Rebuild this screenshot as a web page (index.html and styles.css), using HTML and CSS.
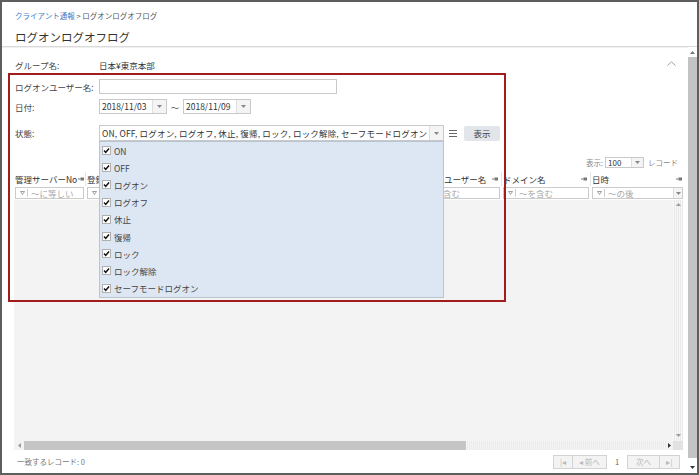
FILE: index.html
```html
<!DOCTYPE html>
<html lang="ja">
<head>
<meta charset="utf-8">
<title>ログオンログオフログ</title>
<link rel="stylesheet" href="styles.css">
</head>
<body>
<div class="frame">
  <header class="top">
    <div class="crumb"><span class="crumb-link">クライアント通報</span> &gt; ログオンログオフログ</div>
    <h1 class="title">ログオンログオフログ</h1>
  </header>
  <div class="main">
    <div class="content">
      <div class="row group-row">
        <span class="label">グループ名:</span>
        <span class="value">日本¥東京本部</span>
        <svg class="chevron" width="9" height="5" viewBox="0 0 9 5"><polyline points="0.5,4.5 4.5,0.8 8.5,4.5" fill="none" stroke="#a0a0a0" stroke-width="1"/></svg>
      </div>
      <div class="row user-row">
        <span class="label">ログオンユーザー名:</span>
        <div class="text-input"></div>
      </div>
      <div class="row date-row">
        <span class="label">日付:</span>
        <div class="date"><span class="date-text">2018/11/03</span><span class="dd-btn"><svg width="5" height="3" viewBox="0 0 5 3"><path d="M0 0h5L2.5 3z" fill="#888"/></svg></span></div>
        <span class="tilde">〜</span>
        <div class="date"><span class="date-text">2018/11/09</span><span class="dd-btn"><svg width="5" height="3" viewBox="0 0 5 3"><path d="M0 0h5L2.5 3z" fill="#888"/></svg></span></div>
      </div>
      <div class="row status-row">
        <span class="label">状態:</span>
        <div class="multi">
          <span class="multi-text">ON, OFF, ログオン, ログオフ, 休止, 復帰, ロック, ロック解除, セーフモードログオン</span>
          <span class="dd-btn"><svg width="5" height="3" viewBox="0 0 5 3"><path d="M0 0h5L2.5 3z" fill="#888"/></svg></span>
          <ul class="dropdown">
            <li class="opt"><svg class="cb" width="9" height="9" viewBox="0 0 9 9"><rect x="0.5" y="0.5" width="8" height="8" fill="#fff" stroke="#b0b0b0"/><path d="M2 4.6L3.7 6.4L7 2.4" fill="none" stroke="#111" stroke-width="1.5"/></svg>ON</li>
            <li class="opt"><svg class="cb" width="9" height="9" viewBox="0 0 9 9"><rect x="0.5" y="0.5" width="8" height="8" fill="#fff" stroke="#b0b0b0"/><path d="M2 4.6L3.7 6.4L7 2.4" fill="none" stroke="#111" stroke-width="1.5"/></svg>OFF</li>
            <li class="opt"><svg class="cb" width="9" height="9" viewBox="0 0 9 9"><rect x="0.5" y="0.5" width="8" height="8" fill="#fff" stroke="#b0b0b0"/><path d="M2 4.6L3.7 6.4L7 2.4" fill="none" stroke="#111" stroke-width="1.5"/></svg>ログオン</li>
            <li class="opt"><svg class="cb" width="9" height="9" viewBox="0 0 9 9"><rect x="0.5" y="0.5" width="8" height="8" fill="#fff" stroke="#b0b0b0"/><path d="M2 4.6L3.7 6.4L7 2.4" fill="none" stroke="#111" stroke-width="1.5"/></svg>ログオフ</li>
            <li class="opt"><svg class="cb" width="9" height="9" viewBox="0 0 9 9"><rect x="0.5" y="0.5" width="8" height="8" fill="#fff" stroke="#b0b0b0"/><path d="M2 4.6L3.7 6.4L7 2.4" fill="none" stroke="#111" stroke-width="1.5"/></svg>休止</li>
            <li class="opt"><svg class="cb" width="9" height="9" viewBox="0 0 9 9"><rect x="0.5" y="0.5" width="8" height="8" fill="#fff" stroke="#b0b0b0"/><path d="M2 4.6L3.7 6.4L7 2.4" fill="none" stroke="#111" stroke-width="1.5"/></svg>復帰</li>
            <li class="opt"><svg class="cb" width="9" height="9" viewBox="0 0 9 9"><rect x="0.5" y="0.5" width="8" height="8" fill="#fff" stroke="#b0b0b0"/><path d="M2 4.6L3.7 6.4L7 2.4" fill="none" stroke="#111" stroke-width="1.5"/></svg>ロック</li>
            <li class="opt"><svg class="cb" width="9" height="9" viewBox="0 0 9 9"><rect x="0.5" y="0.5" width="8" height="8" fill="#fff" stroke="#b0b0b0"/><path d="M2 4.6L3.7 6.4L7 2.4" fill="none" stroke="#111" stroke-width="1.5"/></svg>ロック解除</li>
            <li class="opt"><svg class="cb" width="9" height="9" viewBox="0 0 9 9"><rect x="0.5" y="0.5" width="8" height="8" fill="#fff" stroke="#b0b0b0"/><path d="M2 4.6L3.7 6.4L7 2.4" fill="none" stroke="#111" stroke-width="1.5"/></svg>セーフモードログオン</li>
          </ul>
        </div>
        <svg class="menu-icon" width="8" height="7" viewBox="0 0 8 7"><path d="M0 0.5h8M0 3.5h8M0 6.5h8" stroke="#666" stroke-width="1"/></svg>
        <button class="show-btn">表示</button>
      </div>

      <div class="toolbar">
        <span>表示:</span>
        <div class="page-size"><span class="ps-text">100</span><span class="dd-btn"><svg width="5" height="3" viewBox="0 0 5 3"><path d="M0 0h5L2.5 3z" fill="#888"/></svg></span></div>
        <span class="rec">レコード</span>
      </div>

      <div class="grid">
        <div class="grid-head">
          <div class="hcell"><span>管理サーバーNo</span><svg class="pin" width="6" height="4" viewBox="0 0 6 4"><path d="M0 2h2.5" stroke="#777"/><rect x="2.5" y="0.5" width="3.5" height="3" fill="#777"/></svg></div>
          <div class="hcell"><span>登録</span></div>
          <div class="hcell"></div>
          <div class="hcell"></div>
          <div class="hcell"><span>ログオンユーザー名</span><svg class="pin" width="6" height="4" viewBox="0 0 6 4"><path d="M0 2h2.5" stroke="#777"/><rect x="2.5" y="0.5" width="3.5" height="3" fill="#777"/></svg></div>
          <div class="hcell"><span>ドメイン名</span><svg class="pin" width="6" height="4" viewBox="0 0 6 4"><path d="M0 2h2.5" stroke="#777"/><rect x="2.5" y="0.5" width="3.5" height="3" fill="#777"/></svg></div>
          <div class="hcell last"><span>日時</span><svg class="pin" width="6" height="4" viewBox="0 0 6 4"><path d="M0 2h2.5" stroke="#777"/><rect x="2.5" y="0.5" width="3.5" height="3" fill="#777"/></svg></div>
        </div>
        <div class="grid-filter">
          <div class="fcell"><div class="fbox"><svg class="tri" width="5" height="4" viewBox="0 0 5 4"><path d="M0.5 0.5h4L2.5 3.5z" fill="none" stroke="#888" stroke-width="0.8"/></svg><span class="fsep"></span><span class="ftext">～に等しい</span></div></div>
          <div class="fcell"><div class="fbox"><svg class="tri" width="5" height="4" viewBox="0 0 5 4"><path d="M0.5 0.5h4L2.5 3.5z" fill="none" stroke="#888" stroke-width="0.8"/></svg><span class="fsep"></span></div></div>
          <div class="fcell"><div class="fbox"></div></div>
          <div class="fcell"><div class="fbox"></div></div>
          <div class="fcell"><div class="fbox"><svg class="tri" width="5" height="4" viewBox="0 0 5 4"><path d="M0.5 0.5h4L2.5 3.5z" fill="none" stroke="#888" stroke-width="0.8"/></svg><span class="fsep"></span><span class="ftext">～を含む</span></div></div>
          <div class="fcell"><div class="fbox"><svg class="tri" width="5" height="4" viewBox="0 0 5 4"><path d="M0.5 0.5h4L2.5 3.5z" fill="none" stroke="#888" stroke-width="0.8"/></svg><span class="fsep"></span><span class="ftext">～を含む</span></div></div>
          <div class="fcell last"><div class="fbox"><svg class="tri" width="5" height="4" viewBox="0 0 5 4"><path d="M0.5 0.5h4L2.5 3.5z" fill="none" stroke="#888" stroke-width="0.8"/></svg><span class="fsep"></span><span class="ftext">～の後</span><span class="fdd"><svg width="5" height="3" viewBox="0 0 5 3"><path d="M0 0h5L2.5 3z" fill="#888"/></svg></span></div></div>
        </div>
        <div class="grid-body">
          <div class="vscroll">
            <svg width="5" height="3" viewBox="0 0 5 3"><path d="M0 3h5L2.5 0z" fill="#999"/></svg>
            <svg width="5" height="3" viewBox="0 0 5 3"><path d="M0 0h5L2.5 3z" fill="#999"/></svg>
          </div>
        </div>
        <div class="hscroll">
          <span class="hs-arrow left"><svg width="3" height="5" viewBox="0 0 3 5"><path d="M3 0v5L0 2.5z" fill="#999"/></svg></span>
          <span class="hs-thumb"></span>
          <span class="hs-track"></span>
          <span class="hs-arrow right"><svg width="3" height="5" viewBox="0 0 3 5"><path d="M0 0v5L3 2.5z" fill="#333"/></svg></span>
          <span class="hs-corner"></span>
        </div>
      </div>

      <div class="footer">
        <span class="count">一致するレコード: 0</span>
        <div class="pager">
          <span class="pbtn w20">|◂</span>
          <span class="pbtn w34">◂ 前へ</span>
          <span class="pnum">1</span>
          <span class="pbtn w33">次へ</span>
          <span class="pbtn w20">▸|</span>
        </div>
      </div>
    </div>
    <div class="page-scroll">
      <span class="ps-arrow up"><svg width="5" height="3" viewBox="0 0 5 3"><path d="M0 3h5L2.5 0z" fill="#777"/></svg></span>
      <span class="ps-thumb"></span>
      <span class="ps-arrow down"><svg width="5" height="3" viewBox="0 0 5 3"><path d="M0 0h5L2.5 3z" fill="#333"/></svg></span>
    </div>
  </div>
  <div class="highlight"></div>
</div>
</body>
</html>
```
FILE: styles.css
```css
* { box-sizing: border-box; margin: 0; padding: 0; }
html, body { width: 699px; height: 475px; overflow: hidden; background: #fff; }
body {
  font-family: "Noto Sans CJK JP", "Noto Sans", sans-serif;
  font-size: 8.5px;
  color: #444;
}
ul { list-style: none; }

.frame {
  position: relative;
  width: 699px;
  height: 475px;
  border: 2px solid #5e5e5e;
  display: flex;
  flex-direction: column;
  background: #fff;
}

/* header */
.top {
  flex: none;
  height: 45px;
  padding-left: 13px;
  border-bottom: 1px solid #dadada;
  box-shadow: 0 1px 0 #f0f0f0;
}
.crumb {
  margin-top: 8px;
  font-size: 7.5px;
  line-height: 12px;
  color: #555;
}
.crumb-link { color: #3c7cc6; }
.title {
  margin-top: 7px;
  font-size: 11.5px;
  line-height: 16px;
  font-weight: normal;
  color: #333;
}

/* main */
.main {
  flex: 1;
  min-height: 0;
  display: flex;
}
.content {
  flex: 1;
  min-width: 0;
  display: flex;
  flex-direction: column;
  padding: 0 5px 0 12px;
}

.row {
  display: flex;
  align-items: center;
  flex: none;
}
.label {
  width: 85px;
  padding-left: 1px;
  white-space: nowrap;
  color: #444;
}
.group-row { margin-top: 12px; height: 12px; }
.value { color: #333; }
.chevron { margin-left: auto; margin-right: 7px; align-self: flex-start; margin-top: 2px; }

.user-row { margin-top: 8px; height: 15px; }
.text-input {
  width: 238px;
  height: 15px;
  border: 1px solid #c9c9c9;
  background: #fff;
}

.date-row { margin-top: 5px; height: 15px; }
.date {
  width: 68px;
  height: 15px;
  display: flex;
  border: 1px solid #c9c9c9;
  background: #fff;
}
.date-text {
  flex: 1;
  padding-left: 2px;
  line-height: 13px;
  color: #333;
}
.dd-btn {
  width: 14px;
  flex: none;
  display: flex;
  align-items: center;
  justify-content: center;
  border-left: 1px solid #dedede;
  background: #f4f4f4;
}
.tilde {
  width: 16px;
  text-align: center;
  color: #555;
}

.status-row { margin-top: 11px; height: 16px; }
.multi {
  position: relative;
  width: 345px;
  height: 16px;
  display: flex;
  border: 1px solid #c9c9c9;
  background: #fff;
}
.multi-text {
  flex: 1;
  padding-left: 2px;
  line-height: 14px;
  white-space: nowrap;
  overflow: hidden;
  letter-spacing: 0.18px;
  color: #333;
}
.dropdown {
  position: absolute;
  z-index: 5;
  top: 15px;
  left: -1px;
  width: 345px;
  height: 157px;
  background: #dde7f3;
  border: 1px solid #b9c4d1;
  padding-left: 2px;
}
.opt {
  height: 17.2px;
  display: flex;
  align-items: center;
  color: #444;
  white-space: nowrap;
}
.cb { margin-right: 3px; flex: none; }
.menu-icon { margin-left: 5px; }
.show-btn {
  margin-left: 7px;
  width: 36px;
  height: 15px;
  border: none;
  border-radius: 2px;
  background: #e2e5e9;
  font-family: inherit;
  font-size: 8.5px;
  color: #444;
}

/* toolbar */
.toolbar {
  flex: none;
  margin-top: 16px;
  height: 11px;
  display: flex;
  justify-content: flex-end;
  align-items: center;
  padding-right: 5px;
  font-size: 7.5px;
  color: #8a8a8a;
}
.page-size {
  width: 39px;
  height: 11px;
  margin-left: 2px;
  display: flex;
  border: 1px solid #c9c9c9;
  background: #fff;
}
.ps-text { flex: 1; padding-left: 2px; line-height: 9px; font-size: 8px; color: #333; }
.page-size .dd-btn { width: 12px; }
.rec { margin-left: 4px; }

/* grid */
.grid {
  flex: 1;
  min-height: 0;
  margin-top: 4px;
  display: flex;
  flex-direction: column;
}
.grid-head, .grid-filter {
  flex: none;
  display: grid;
  grid-template-columns: 72px 109px 105px 109px 93px 89px 1fr;
}
.grid-head { height: 14px; }
.hcell {
  display: flex;
  align-items: center;
  justify-content: space-between;
  padding-left: 1px;
  padding-right: 3px;
  border-right: 1px solid #e8e8e8;
  white-space: nowrap;
  overflow: hidden;
  color: #333;
  line-height: 14px;
}
.hcell.last { border-right: none; padding-right: 1px; }
.pin { flex: none; margin-left: 1px; }

.grid-filter { height: 14px; }
.fcell { padding: 1px 2px 1px 1px; }
.fcell.last { padding-right: 0; }
.fbox {
  height: 12px;
  display: flex;
  align-items: center;
  padding-left: 4px;
  border: 1px solid #cbcbcb;
  background: #fff;
  overflow: hidden;
  white-space: nowrap;
}
.fsep { width: 1px; height: 8px; background: #cfcfcf; margin: 0 3px 0 2px; flex: none; }
.ftext { color: #a8a8a8; flex: 1; }
.fdd {
  width: 9px;
  height: 10px;
  display: flex;
  align-items: center;
  justify-content: center;
  border-left: 1px solid #dedede;
  background: #f4f4f4;
}

.grid-body {
  flex: 1;
  min-height: 0;
  display: flex;
  justify-content: flex-end;
  background: #f3f3f3;
}
.vscroll {
  width: 10px;
  display: flex;
  flex-direction: column;
  justify-content: space-between;
  align-items: center;
  padding: 3px 0 4px;
  background: repeating-linear-gradient(90deg, #f7f7f7 0 1px, #e9e9e9 1px 2px);
}

.hscroll {
  flex: none;
  height: 9px;
  display: flex;
  align-items: stretch;
  background: #f3f3f3;
}
.hs-arrow {
  display: flex;
  align-items: center;
  justify-content: center;
}
.hs-arrow.left { width: 10px; }
.hs-arrow.right { width: 7px; }
.hs-thumb { width: 442px; background: #c5c5c5; }
.hs-track {
  flex: 1;
  background: repeating-linear-gradient(90deg, #f5f5f5 0 1px, #ebebeb 1px 2px);
}
.hs-corner { width: 10px; background: #e2e2e2; }

/* footer */
.footer {
  flex: none;
  height: 23px;
  display: flex;
  align-items: center;
  justify-content: space-between;
  padding-left: 3px;
  padding-right: 3px;
}
.count { font-size: 7.5px; color: #777; }
.pager { display: flex; align-items: center; }
.pbtn {
  height: 14px;
  display: flex;
  align-items: center;
  justify-content: center;
  border: 1px solid #d3d3d3;
  background: #f3f3f3;
  color: #b8b8b8;
  font-size: 7.5px;
}
.pbtn + .pbtn { border-left: none; }
.w20 { width: 20px; }
.w34 { width: 34px; }
.w33 { width: 33px; }
.pnum { width: 20px; text-align: center; font-size: 7.5px; color: #666; }

/* page scrollbar */
.page-scroll {
  flex: none;
  width: 9px;
  display: flex;
  flex-direction: column;
  background: #fff;
}
.ps-arrow {
  display: flex;
  justify-content: center;
}
.ps-arrow.up { height: 10px; align-items: center; }
.ps-arrow.down { height: 15px; align-items: flex-end; padding-bottom: 4px; }
.ps-thumb { flex: 1; background: #c3c3c3; }

/* annotation overlay */
.highlight {
  position: absolute;
  z-index: 10;
  left: 6px;
  top: 71px;
  width: 498px;
  height: 229px;
  border: 2px solid #a11d1d;
  pointer-events: none;
}
```
